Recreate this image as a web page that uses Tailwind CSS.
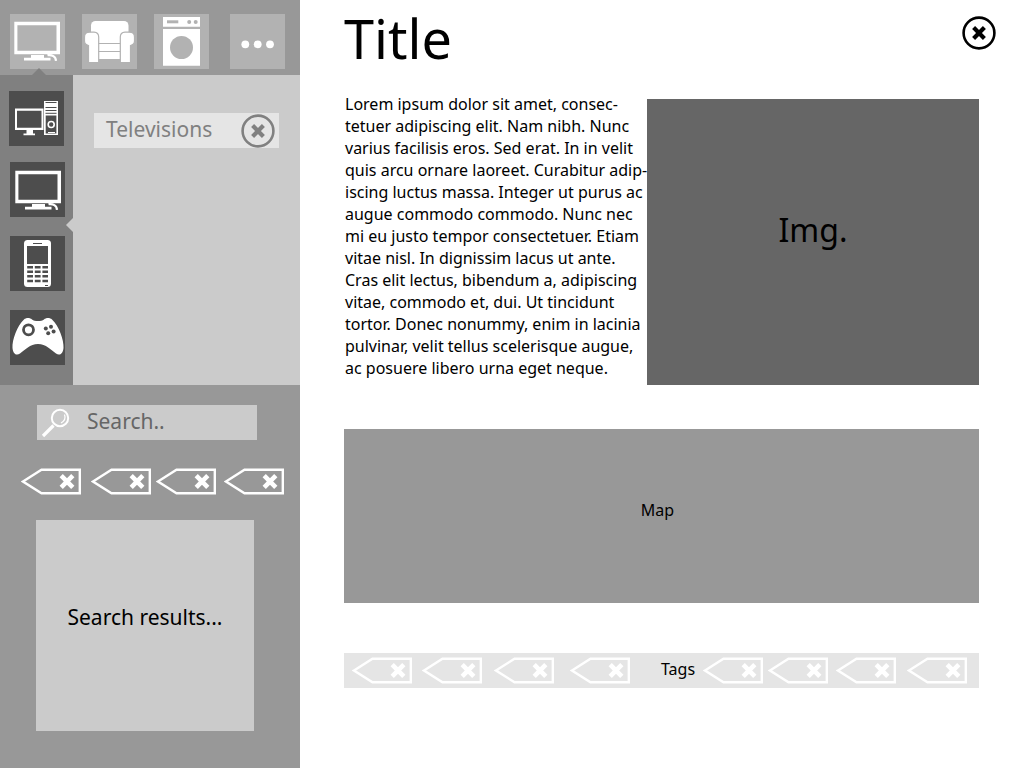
<!DOCTYPE html>
<html lang="en">
<head>
<meta charset="utf-8">
<meta name="viewport" content="width=device-width, initial-scale=1">
<title>Title</title>
<script src="https://cdn.jsdelivr.net/npm/@tailwindcss/browser@4"></script>
</head>
<body class="bg-white text-black font-['Noto_Sans','Open_Sans',sans-serif]">
<svg width="0" height="0" class="absolute" aria-hidden="true">
  <defs>
    <symbol id="tag" viewBox="0 0 60 27">
      <path d="M2 13.500 20.500 1.700H58.800V25.300H20.500Z" fill="none" stroke="#fff" stroke-width="2.400"/>
      <path d="M40.200 7.700 51.800 19.300M51.800 7.700 40.200 19.300" stroke="#fff" stroke-width="4.600"/>
    </symbol>
    <symbol id="tv" viewBox="0 0 55 55">
      <path fill="#fff" fill-rule="evenodd" d="M4.300 7.700H50V40.300H4.300ZM7.400 11.300V36.700H46.500V11.300Z"/>
      <path fill="#fff" d="M21 41H34V43.800H40.500V46.500H14V43.800H21Z"/>
      <path d="M37.500 41.200C42 40.500 45.800 42.500 46 46.900" fill="none" stroke="#fff" stroke-width="2.200"/>
    </symbol>
    <symbol id="close" viewBox="0 0 34 34">
      <circle cx="17" cy="17" r="15.400" fill="none" stroke="currentColor" stroke-width="2.600"/>
      <path d="M11.600 11.600 22.400 22.400M22.400 11.600 11.600 22.400" stroke="currentColor" stroke-width="4.200"/>
    </symbol>
  </defs>
</svg>
<div class="flex min-h-screen">
  <aside class="w-[300px] shrink-0 bg-[#989898]">
    <nav aria-label="Categories" class="flex h-[75px] pt-[14px] pl-[10px]">
      <button aria-label="Electronics" class="relative size-[55px] bg-[#b2b2b2]">
        <svg class="size-[55px]"><use href="#tv"/></svg>
        <svg class="absolute top-[54px] left-[22px] h-[7px] w-[14px]" viewBox="0 0 14 7"><path d="M0 7 7 0 14 7Z" fill="#808080"/></svg>
      </button>
      <button aria-label="Furniture" class="ml-[17px] size-[55px] bg-[#b2b2b2]">
        <svg class="size-[55px]" viewBox="0 0 55 55" fill="#fff">
          <rect x="9" y="7" width="37.500" height="22" rx="4.500"/>
          <path d="M16 30H38.500V37H16ZM16 38H38.500V45H16Z"/>
          <g stroke="#b2b2b2" stroke-width="1.200">
            <path d="M7.500 18.200H12Q16.700 18.500 16.700 23V48.500H6.500V31.500Q2.500 30.500 2.500 27V23Q2.500 18.200 7.500 18.200Z"/>
            <path d="M47.500 18.200H43Q38.300 18.500 38.300 23V48.500H48.500V31.500Q52.500 30.500 52.500 27V23Q52.500 18.200 47.500 18.200Z"/>
          </g>
        </svg>
      </button>
      <button aria-label="Appliances" class="ml-[17px] size-[55px] bg-[#b2b2b2]">
        <svg class="size-[55px]" viewBox="0 0 55 55" fill="#fff">
          <path d="M9 3H46V12.800H9ZM9 15H46V51.700H9Z"/>
          <g fill="#b2b2b2"><path d="M13 6.300H24.300V9.300H13Z"/><circle cx="35.200" cy="8" r="2"/><circle cx="41.700" cy="8" r="2"/><circle cx="27.500" cy="33.500" r="11.500"/></g>
        </svg>
      </button>
      <button aria-label="More" class="ml-[21px] size-[55px] bg-[#b2b2b2]">
        <svg class="size-[55px]" viewBox="0 0 55 55" fill="#fff"><circle cx="15.300" cy="30.300" r="3.900"/><circle cx="27.700" cy="30.300" r="3.900"/><circle cx="40" cy="30.300" r="3.900"/></svg>
      </button>
    </nav>
    <div class="flex h-[310px]">
      <nav aria-label="Electronics" class="relative flex w-[73px] shrink-0 flex-col bg-[#808080] pt-4 pl-[9px]">
        <button aria-label="Computers" class="size-[55px] bg-[#4d4d4d]">
          <svg class="size-[55px]" viewBox="0 0 55 55">
            <path fill="#fff" fill-rule="evenodd" d="M6 17.500H34.500V39H24V42.500H26V44.300H14.500V42.500H17.500V39H6ZM8 19.700V36.800H32.500V19.700Z"/>
            <path fill="#fff" fill-rule="evenodd" d="M35 10H49V44H35ZM36.700 24.500V42.400H47.400V24.500Z"/>
            <path d="M36.500 11.500H47.500M36.500 16.500H47.500M36.500 19.500H47.500M36.500 22.300H47.500" stroke="#4d4d4d" stroke-width="1"/>
            <circle cx="42.200" cy="33.500" r="3" fill="none" stroke="#fff" stroke-width="1.600"/>
            <path d="M39 41.500H46" stroke="#fff"/>
          </svg>
        </button>
        <button aria-label="Televisions" class="mt-4 ml-px size-[55px] bg-[#4d4d4d]">
          <svg class="size-[55px]"><use href="#tv" x="1" y="1"/></svg>
        </button>
        <button aria-label="Phones" class="mt-[19px] ml-px size-[55px] bg-[#4d4d4d]">
          <svg class="size-[55px]" viewBox="0 0 55 55">
            <rect x="14" y="4" width="27" height="47" rx="3.500" fill="#fff"/>
            <path fill="#4d4d4d" d="M17 10H38V28H17ZM23 7H32V8H23ZM35 49H38V50H35Z"/>
            <path d="M17.200 31.200H38M17.200 35.800H38M17.200 40.300H38M17.200 45H38" stroke="#4d4d4d" stroke-width="2.400" stroke-dasharray="5.800 1.800"/>
          </svg>
        </button>
        <button aria-label="Games" class="mt-[19px] ml-px size-[55px] bg-[#4d4d4d]">
          <svg class="size-[55px]" viewBox="0 0 55 55">
            <path fill="#fff" d="M14 9.500C16 7.500 20 7.500 22 9.500 24.500 11.500 31.500 11.500 34 9.500 36 7.500 40 7.500 42 9.500 49 16 54 30 53.500 38 53 44 49.500 46 46 43.500 41 40 36 34 28 34S15 40 10 43.500C6.500 46 3 44 2.500 38 2 30 7 16 14 9.500Z"/>
            <circle cx="18.500" cy="19.800" r="5" fill="none" stroke="#4d4d4d" stroke-width="2.800"/>
            <g fill="#4d4d4d"><circle cx="35.800" cy="18.500" r="2"/><circle cx="41" cy="16.800" r="2"/><circle cx="43.600" cy="21.600" r="2"/><circle cx="38.200" cy="23.200" r="2"/></g>
          </svg>
        </button>
        <svg class="absolute top-[143px] right-0 h-[14px] w-[7px]" viewBox="0 0 7 14"><path d="M7 0 0 7 7 14Z" fill="#cbcbcb"/></svg>
      </nav>
      <section class="flex-1 bg-[#cbcbcb] px-[21px] pt-[38px]">
        <div class="flex h-[35px] items-center justify-between bg-[#e5e5e5] pr-1 pl-3 text-[#808080]">
          <span class="text-[21px] leading-[33px] pb-[2px]">Televisions</span>
          <button aria-label="Remove Televisions" class="size-[34px]"><svg class="size-[34px]"><use href="#close"/></svg></button>
        </div>
      </section>
    </div>
    <label class="mt-5 ml-[37px] flex h-[35px] w-[220px] items-center bg-[#cbcbcb]">
      <svg class="ml-1 h-[30px] w-[30px] shrink-0" viewBox="0 0 30 30" fill="none" stroke="#fff" aria-hidden="true">
        <circle cx="19" cy="10" r="8.200" stroke-width="2"/><path d="M23.500 6.500Q25.500 12 20 15" stroke-width="1.200"/><path d="M12.500 17.500 2 28" stroke-width="3.200"/>
      </svg>
      <input type="text" aria-label="Search" placeholder="Search.." class="ml-4 w-full min-w-0 bg-transparent pb-[2px] text-[21px] leading-[33px] outline-none placeholder:text-[#666666]">
    </label>
    <div class="mt-[28px] flex pl-[21px]">
      <button aria-label="Remove tag 1" class="h-[27px] w-[60px]"><svg class="h-[27px] w-[60px]"><use href="#tag"/></svg></button>
      <button aria-label="Remove tag 2" class="ml-[10px] h-[27px] w-[60px]"><svg class="h-[27px] w-[60px]"><use href="#tag"/></svg></button>
      <button aria-label="Remove tag 3" class="ml-[5px] h-[27px] w-[60px]"><svg class="h-[27px] w-[60px]"><use href="#tag"/></svg></button>
      <button aria-label="Remove tag 4" class="ml-2 h-[27px] w-[60px]"><svg class="h-[27px] w-[60px]"><use href="#tag"/></svg></button>
    </div>
    <section class="mt-[25px] mr-[46px] ml-[36px] flex h-[211px] items-center justify-center bg-[#cbcbcb] pb-4">
      <p class="text-[21px]">Search results...</p>
    </section>
  </aside>
  <main class="min-w-0 flex-1 pl-[44px]">
    <header class="flex h-[99px] items-start justify-between pr-[28px]">
      <h1 class="text-[54px] leading-[77px]">Title</h1>
      <button aria-label="Close" class="mt-4 size-[34px]"><svg class="size-[34px]"><use href="#close"/></svg></button>
    </header>
    <div class="mr-[45px]">
      <div class="flex h-[286px]">
        <p class="-mt-[6px] w-[303px] shrink-0 pl-px text-base leading-[22px] whitespace-nowrap">Lorem ipsum dolor sit amet, consec-<br>tetuer adipiscing elit. Nam nibh. Nunc<br>varius facilisis eros. Sed erat. In in velit<br>quis arcu ornare laoreet. Curabitur adip-<br>iscing luctus massa. Integer ut purus ac<br>augue commodo commodo. Nunc nec<br>mi eu justo tempor consectetuer. Etiam<br>vitae nisl. In dignissim lacus ut ante.<br>Cras elit lectus, bibendum a, adipiscing<br>vitae, commodo et, dui. Ut tincidunt<br>tortor. Donec nonummy, enim in lacinia<br>pulvinar, velit tellus scelerisque augue,<br>ac posuere libero urna eget neque.</p>
        <div class="flex flex-1 items-center justify-center bg-[#666666] pb-6"><span class="text-[32px]">Img.</span></div>
      </div>
      <div class="mt-11 flex h-[174px] items-center justify-center bg-[#989898] pr-2 pb-3">Map</div>
      <div class="mt-[50px] flex h-[35px] items-center bg-[#e5e5e5] pl-2">
        <button aria-label="Remove tag 1" class="h-[27px] w-[60px]"><svg class="h-[27px] w-[60px]"><use href="#tag"/></svg></button>
        <button aria-label="Remove tag 2" class="ml-[10px] h-[27px] w-[60px]"><svg class="h-[27px] w-[60px]"><use href="#tag"/></svg></button>
        <button aria-label="Remove tag 3" class="ml-3 h-[27px] w-[60px]"><svg class="h-[27px] w-[60px]"><use href="#tag"/></svg></button>
        <button aria-label="Remove tag 4" class="ml-4 h-[27px] w-[60px]"><svg class="h-[27px] w-[60px]"><use href="#tag"/></svg></button>
        <span class="w-[73px] pb-[3px] pl-[31px]">Tags</span>
        <button aria-label="Remove tag 5" class="h-[27px] w-[60px]"><svg class="h-[27px] w-[60px]"><use href="#tag"/></svg></button>
        <button aria-label="Remove tag 6" class="ml-[5px] h-[27px] w-[60px]"><svg class="h-[27px] w-[60px]"><use href="#tag"/></svg></button>
        <button aria-label="Remove tag 7" class="ml-2 h-[27px] w-[60px]"><svg class="h-[27px] w-[60px]"><use href="#tag"/></svg></button>
        <button aria-label="Remove tag 8" class="ml-[11px] h-[27px] w-[60px]"><svg class="h-[27px] w-[60px]"><use href="#tag"/></svg></button>
      </div>
    </div>
  </main>
</div>
</body>
</html>
